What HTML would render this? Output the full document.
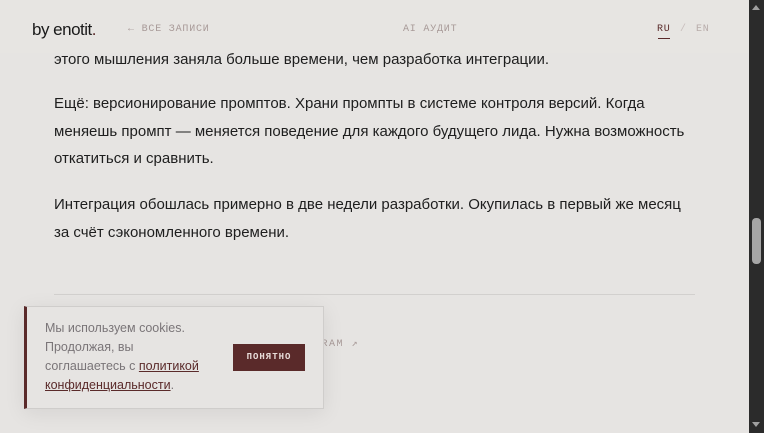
<!DOCTYPE html>
<html><head><meta charset="utf-8"><style>
*{margin:0;padding:0;box-sizing:border-box}
body{width:764px;height:433px;overflow:hidden;background:#e6e4e2;font-family:"Liberation Sans",sans-serif;position:relative}
.content{position:absolute;left:54px;top:2px;width:640px;color:#1e1e1e;font-size:15px;line-height:27.5px}
.content p{position:absolute;left:0;width:640px}
header{position:absolute;left:0;top:0;width:749px;height:53px;background:rgba(230,228,226,0.97)}
.logo{position:absolute;left:32px;top:20px;font-size:17px;color:#1a1a1a;letter-spacing:-0.5px}
.logo span{color:#5a2a2a}
.nav{position:absolute;top:24px;font-family:"Liberation Mono",monospace;font-size:10px;letter-spacing:0.8px;color:#a89a98}
.sb{position:absolute;left:749px;top:0;width:15px;height:433px;background:#2b2b2b}
.thumb{position:absolute;left:3px;top:218px;width:9px;height:46px;background:#a6a6a6;border-radius:4px}
.cookie{position:absolute;left:24px;top:306px;width:300px;height:103px;background:#e6e4e2;border:1px solid #cfcdcb;border-left:3px solid #5a2a2a;box-shadow:0 4px 20px rgba(0,0,0,.08)}
.ct{position:absolute;left:18px;top:12px;font-size:12.5px;line-height:19px;color:#7a7578;width:160px}
.ct a{color:#5a2a2a;text-decoration:underline}
.btn{position:absolute;left:206px;top:37px;width:72px;height:27px;background:#5a2a2a;color:#e8dcd8;font-size:9px;font-weight:bold;letter-spacing:1px;text-align:center;line-height:27px;font-family:"Liberation Mono",monospace}
</style></head><body>
<div class="content">
<p style="top:44px">этого мышления заняла больше времени, чем разработка интеграции.</p>
<p style="top:88px">Ещё: версионирование промптов. Храни промпты в системе контроля версий. Когда меняешь промпт — меняется поведение для каждого будущего лида. Нужна возможность откатиться и сравнить.</p>
<p style="top:189px">Интеграция обошлась примерно в две недели разработки. Окупилась в первый же месяц<br>за счёт сэкономленного времени.</p>
<div style="position:absolute;left:0;top:292px;width:641px;height:1px;background:#d2d0ce"></div>
<div style="position:absolute;left:230px;top:329px;font-family:'Liberation Mono',monospace;font-size:10px;letter-spacing:1.5px;color:#a89a98">TELEGRAM ↗</div>
</div>
<header>
<div class="logo">by enotit<span>.</span></div>
<div class="nav" style="left:128px">← ВСЕ ЗАПИСИ</div>
<div class="nav" style="left:403px">AI АУДИТ</div>
<div class="nav" style="left:657px;color:#5a2a2a">RU</div>
<div style="position:absolute;left:658px;top:38px;width:12px;height:1px;background:#5a2a2a"></div>
<div class="nav" style="left:680px;color:#c8bebc">/</div>
<div class="nav" style="left:696px;color:#b8acaa">EN</div>
</header>
<div class="cookie">
<div class="ct">Мы используем cookies. Продолжая, вы соглашаетесь с <a>политикой конфиденциальности</a>.</div>
<div class="btn">ПОНЯТНО</div>
</div>
<div class="sb"><div style="position:absolute;left:3px;top:5px;border:4.5px solid transparent;border-bottom:5px solid #a0a0a0;border-top:0"></div><div class="thumb"></div><div style="position:absolute;left:3px;top:422px;border:4.5px solid transparent;border-top:5px solid #a0a0a0;border-bottom:0"></div></div>
</body></html>
